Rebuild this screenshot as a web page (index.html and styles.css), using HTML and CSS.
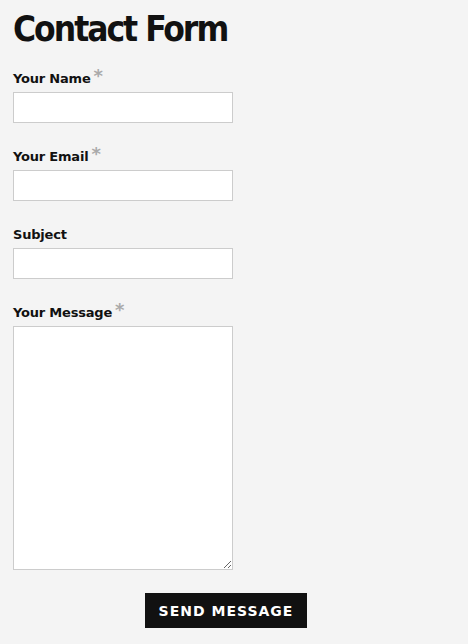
FILE: index.html
```html
<!DOCTYPE html>
<html>
<head>
<meta charset="utf-8">
<link rel="stylesheet" href="styles.css">
</head>
<body>
<div class="page">
  <h1 class="title">Contact Form</h1>
  <form class="form">
    <div class="field">
      <label class="label">Your Name<span class="req">*</span></label>
      <input class="input" type="text">
    </div>
    <div class="field">
      <label class="label">Your Email<span class="req">*</span></label>
      <input class="input" type="text">
    </div>
    <div class="field">
      <label class="label">Subject</label>
      <input class="input" type="text">
    </div>
    <div class="field field-last">
      <label class="label">Your Message<span class="req">*</span></label>
      <textarea class="textarea"></textarea>
    </div>
    <div class="actions">
      <button class="btn" type="button">SEND MESSAGE</button>
    </div>
  </form>
</div>
</body>
</html>
```
FILE: styles.css
```css
html, body {
  margin: 0;
  padding: 0;
  background: #f4f4f4;
}
.page {
  padding: 8px 13px 0 13px;
  width: 426px;
}
.title {
  margin: 0;
  font-family: "DejaVu Sans", sans-serif;
  font-stretch: semi-condensed;
  font-weight: bold;
  font-size: 35px;
  letter-spacing: -2px;
  line-height: 42px;
  color: #111;
}
.form {
  margin-top: 20px;
}
.field {
  display: flex;
  flex-direction: column;
  align-items: flex-start;
  margin-bottom: 25px;
}
.field-last {
  margin-bottom: 23px;
}
.label {
  font-family: "DejaVu Sans", sans-serif;
  font-weight: bold;
  font-size: 13px;
  letter-spacing: -0.2px;
  color: #111;
  line-height: 16px;
  padding-top: 1px;
  margin-bottom: 5px;
}
.req {
  color: #aaa;
  font-size: 18px;
  vertical-align: top;
  line-height: 10px;
  margin-left: 3px;
}
.input {
  display: block;
  box-sizing: border-box;
  width: 220px;
  height: 31px;
  border: 1px solid #ccc;
  background: #fff;
  margin: 0;
  padding: 4px;
}
.textarea {
  display: block;
  box-sizing: border-box;
  width: 220px;
  height: 244px;
  border: 1px solid #ccc;
  background: #fff;
  margin: 0;
  padding: 4px;
  resize: both;
}
.actions {
  text-align: center;
}
.btn {
  background: #111;
  color: #fff;
  border: 0;
  height: 35px;
  width: 162px;
  font-family: "DejaVu Sans", sans-serif;
  font-weight: bold;
  font-size: 14px;
  letter-spacing: 1px;
  cursor: pointer;
  vertical-align: top;
}
```
